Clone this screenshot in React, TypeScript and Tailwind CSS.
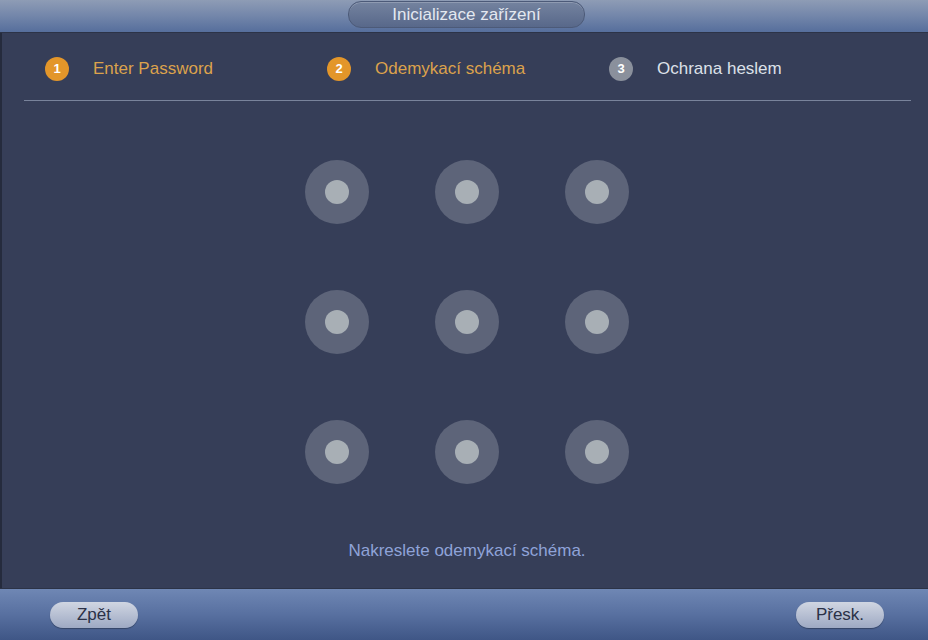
const steps = [
  { n: 1, label: "Enter Password", active: true },
  { n: 2, label: "Odemykací schéma", active: true },
  { n: 3, label: "Ochrana heslem", active: false },
];

const dots = Array.from({ length: 9 }, (_, i) => i);

export default function App() {
  return (
    <div
      className="w-[928px] h-[640px] flex flex-col bg-[#363e58] shadow-[inset_2px_0_0_#252b3d] overflow-hidden"
      style={{ fontFamily: '"Liberation Sans", Arial, sans-serif' }}
    >
      {/* title bar */}
      <div className="h-[33px] shrink-0 flex justify-center bg-gradient-to-b from-[#8e9cb5] via-[#7386aa] to-[#566e9c] border-b border-[#2c3347]">
        <div className="mt-[1px] ml-[5px] w-[237px] h-[27px] rounded-[13px] flex items-center justify-center bg-gradient-to-b from-[#74839f] to-[#58688a] border border-[#4c5a78] shadow-[inset_0_1px_0_rgba(255,255,255,0.2)]">
          <span className="text-[17px] text-[#e3e8f0]">Inicializace zařízení</span>
        </div>
      </div>

      {/* main */}
      <div className="flex-1 flex flex-col">
        <div className="mt-[24px] h-[24px] flex items-center">
          {steps.map((s) => (
            <div key={s.n} className="w-[282px] flex items-center pl-[45px]">
              <div
                className={`w-[24px] h-[24px] rounded-full flex items-center justify-center text-[13px] font-bold text-white ${
                  s.active ? "bg-[#e3962a]" : "bg-[#8a909c]"
                }`}
              >
                {s.n}
              </div>
              <span
                className={`ml-[24px] text-[17px] ${s.active ? "text-[#dca24c]" : "text-[#dde1e9]"}`}
              >
                {s.label}
              </span>
            </div>
          ))}
        </div>
        <div className="mt-[19px] ml-[24px] mr-[17px] h-px bg-[#79839b]" />

        <div className="mt-[59px] flex justify-center pl-[6px]">
          <div className="grid grid-cols-3 gap-x-[66px] gap-y-[66px]">
            {dots.map((d) => (
              <div
                key={d}
                className="w-[64px] h-[64px] rounded-full bg-[#5d6479] flex items-center justify-center"
              >
                <div className="w-[24px] h-[24px] rounded-full bg-[#a8afb5]" />
              </div>
            ))}
          </div>
        </div>

        <div className="mt-[54px] flex justify-center pl-[6px]">
          <span className="text-[17px] text-[#8fa3d8]">Nakreslete odemykací schéma.</span>
        </div>
      </div>

      {/* bottom bar */}
      <div className="h-[52px] shrink-0 flex justify-between items-start pt-[13px] pl-[50px] pr-[44px] bg-gradient-to-b from-[#6f87b4] via-[#5870a0] to-[#3f5686] border-t border-[#2c3347]">
        <button className="w-[88px] h-[26px] rounded-[13px] bg-gradient-to-b from-[#d0d6e2] to-[#9ea9c3] text-[17px] text-[#2b3147] flex items-center justify-center shadow-[0_1px_1px_rgba(0,0,0,0.3)]">
          Zpět
        </button>
        <button className="w-[88px] h-[26px] rounded-[13px] bg-gradient-to-b from-[#d0d6e2] to-[#9ea9c3] text-[17px] text-[#2b3147] flex items-center justify-center shadow-[0_1px_1px_rgba(0,0,0,0.3)]">
          Přesk.
        </button>
      </div>
    </div>
  );
}
